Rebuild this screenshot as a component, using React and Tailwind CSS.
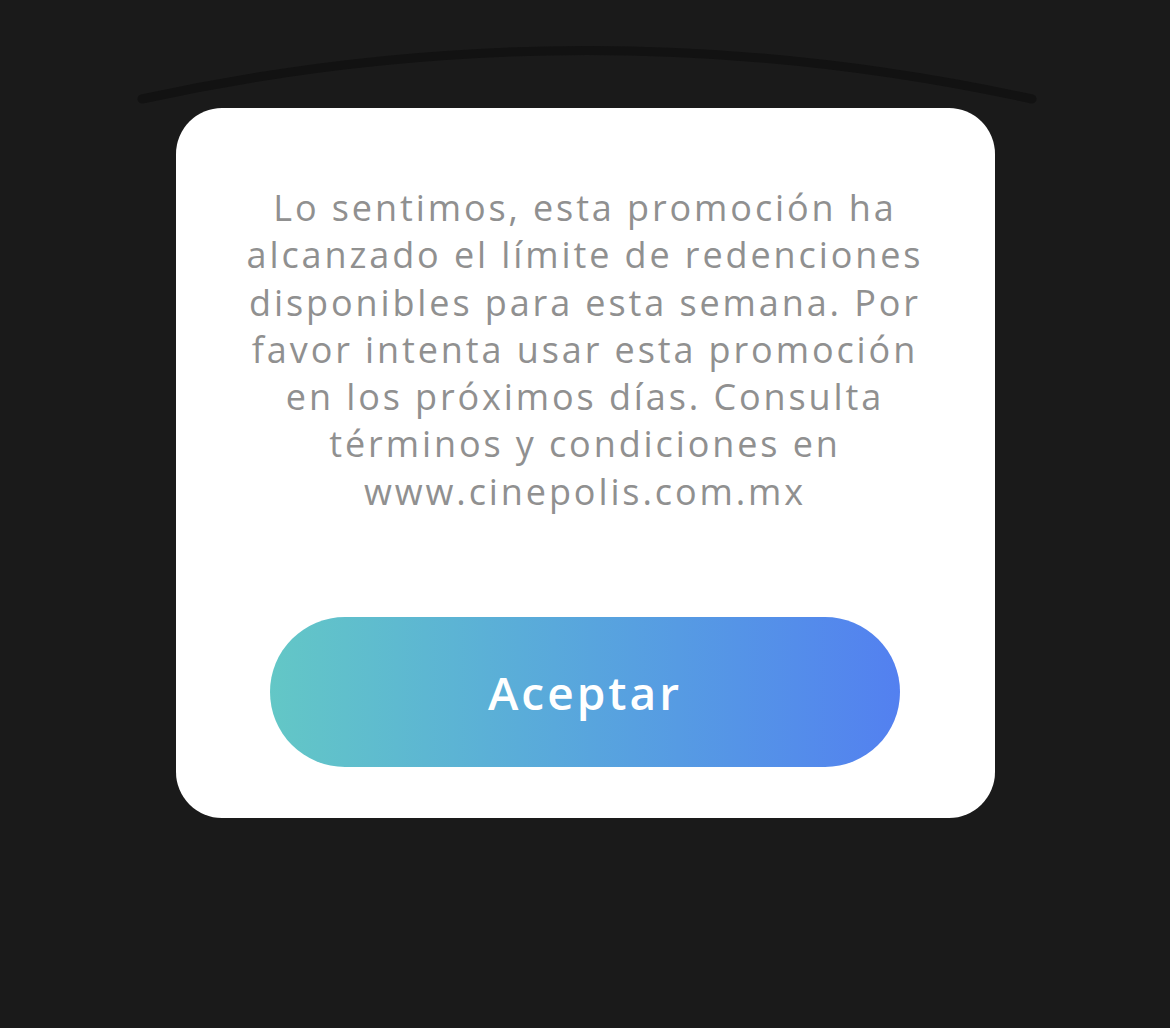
import React from 'react';

const lines = [
  'Lo sentimos, esta promoción ha',
  'alcanzado el límite de redenciones',
  'disponibles para esta semana. Por',
  'favor intenta usar esta promoción',
  'en los próximos días. Consulta',
  'términos y condiciones en',
  'www.cinepolis.com.mx',
];

const App = () => {
  return (
    <div className="min-h-screen w-full bg-[#1a1a1a] flex flex-col items-center" style={{ fontFamily: '"Open Sans", sans-serif' }}>
      {/* Backdrop arc */}
      <svg width="1170" height="108" viewBox="0 0 1170 108" className="block shrink-0">
        <path d="M142 99 Q587 2 1032 99" fill="none" stroke="#121212" strokeWidth="9" strokeLinecap="round" />
      </svg>

      {/* Dialog */}
      <div className="w-[819px] h-[710px] bg-white rounded-[46px] flex flex-col items-center pt-[76px]">
        <p className="text-[36px] leading-[47.3px] text-[#909090] text-center tracking-[2.9px] whitespace-nowrap">
          {lines.map((l, i) => (
            <React.Fragment key={i}>
              {l}
              {i < lines.length - 1 && <br />}
            </React.Fragment>
          ))}
        </p>

        <button className="mt-[102px] w-[630px] h-[150px] rounded-full bg-gradient-to-r from-[#63c7c6] to-[#5380f0] text-white text-[46px] font-semibold tracking-[3px] flex items-center justify-center">
          Aceptar
        </button>
      </div>
    </div>
  );
};

export default App;
